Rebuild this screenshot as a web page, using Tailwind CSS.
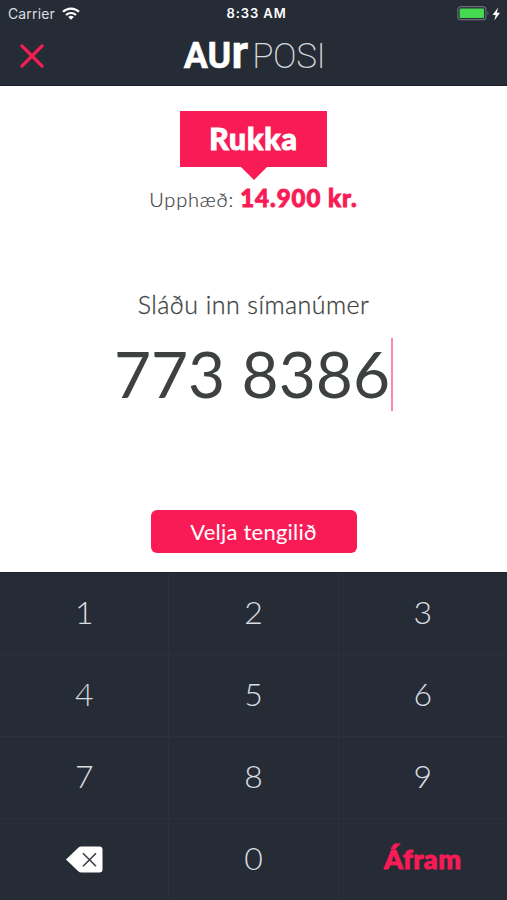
<!DOCTYPE html>
<html lang="is">
  <head>
    <meta charset="UTF-8" />
    <meta name="viewport" content="width=device-width, initial-scale=1.0" />
    <title>Aur Posi</title>
    <script src="https://cdn.jsdelivr.net/npm/@tailwindcss/browser@4"></script>
  </head>
  <body class="bg-white">
    <div class="flex h-[900px] w-[507px] flex-col overflow-hidden font-['Lato','Open_Sans',sans-serif]">
      <header class="h-[86px] shrink-0 border-b border-[#1d212a] bg-[#262c35] text-white">
        <!-- Status bar -->
        <div class="grid h-7 grid-cols-3 items-center pr-1.5 pl-2 font-['Inter',sans-serif] text-[13px]">
          <div class="flex items-center gap-1.5 text-[#dcdee2]">
            <span class="w-[48px] pb-0.5 text-[14px] tracking-[0.01em]">Carrier</span>
            <svg class="mb-0.5 h-[13px] w-[18px]" viewBox="0 0 18 13" fill="none" stroke="#fff" stroke-width="2.2">
              <path d="M1 4.8a11.5 11.5 0 0 1 16 0" />
              <path d="M4 8a7.2 7.2 0 0 1 10 0" />
              <path d="M9 12.8 6.2 10a4 4 0 0 1 5.6 0z" fill="#fff" stroke="none" />
            </svg>
          </div>
          <div class="pl-1 text-center font-semibold tracking-[0.07em] whitespace-nowrap">8:33 AM</div>
          <div class="flex items-center justify-end">
            <svg class="h-4 w-[44px]" viewBox="0 0 44 16">
              <rect x=".8" y=".7" width="28" height="13" rx="3" fill="none" stroke="#696e75" stroke-width="1.2" />
              <rect x="2.6" y="2.5" width="24.4" height="9.4" rx="1" fill="#44d94f" />
              <path d="M30.5 5q2 2.2 0 4.4z" fill="#696e75" />
              <path d="M41.2 1.5 35.5 9h3.2l-1.4 5.5L43 6.8h-3.2z" fill="#fff" />
            </svg>
          </div>
        </div>
        <div class="grid h-14 grid-cols-[1fr_auto_1fr] items-center px-5">
          <svg class="h-6 w-6" viewBox="0 0 24 24" stroke="#f71b56" stroke-width="3.2" stroke-linecap="round">
            <path d="M1.9 1.9l20.2 20.2M22.1 1.9 1.9 22.1" />
          </svg>
          <div class="flex h-14 items-baseline gap-1 pl-0.5 font-['Roboto',sans-serif] text-[36px] leading-[54px]">
            <span class="font-bold [-webkit-text-stroke:0.5px_#fff]">AU<span class="text-[47px] leading-none font-semibold">r</span></span>
            <span class="text-[35px] font-extralight tracking-[-0.01em] text-[#d5d8dd]">POSI</span>
          </div>
        </div>
      </header>

      <main class="flex h-[486px] shrink-0 flex-col items-center bg-white pt-[25px] text-[#3e4142]">
        <div class="flex h-14 w-[147px] items-center justify-center bg-[#f91b56] pb-0.5 text-[30px] font-black tracking-[0.03em] text-white [-webkit-text-stroke:1px_#fff]">Rukka</div>
        <svg class="h-[13px] w-[26px] shrink-0" viewBox="0 0 26 13"><path d="M0 0h26L13 13z" fill="#f91b56" /></svg>
        <p class="mt-0.5 flex h-8 items-baseline gap-1.5 whitespace-nowrap text-xl leading-8">
          <span class="font-light tracking-[0.04em] [-webkit-text-stroke:0.2px_#3e4142]">Upphæð:</span>
          <span class="text-2xl leading-8 font-black tracking-[0.04em] text-[#f91b56] [-webkit-text-stroke:0.9px_#f91b56]">14.900 kr.</span>
        </p>
        <p class="mt-[72px] h-9 text-[25px] leading-9 font-light tracking-[0.018em] whitespace-nowrap [-webkit-text-stroke:0.3px_#3e4142]">Sláðu inn símanúmer</p>
        <div class="mt-[15px] flex h-[74px] items-center gap-px">
          <span class="pb-px text-[64px] leading-[74px] whitespace-nowrap">773 8386</span>
          <span class="h-[73px] w-0.5 bg-[#f98aa7]"></span>
        </div>
        <button class="mt-[99px] h-[43px] w-[206px] rounded-md bg-[#f91b56] pb-px text-[22px] tracking-[0.01em] text-white">Velja tengilið</button>
      </main>

      <!-- Keypad -->
      <div class="grid flex-1 grid-cols-3 grid-rows-4 gap-px border-t border-[#20242d] bg-[#2d303a] text-[32px] font-light text-[#d9dce2]">
        <button class="bg-[#262c35] pb-1">1</button>
        <button class="bg-[#262c35] pb-1">2</button>
        <button class="bg-[#262c35] pb-1">3</button>
        <button class="bg-[#262c35] pb-1">4</button>
        <button class="bg-[#262c35] pb-1">5</button>
        <button class="bg-[#262c35] pb-1">6</button>
        <button class="bg-[#262c35] pb-1">7</button>
        <button class="bg-[#262c35] pb-1">8</button>
        <button class="bg-[#262c35] pb-1">9</button>
        <button class="flex items-center justify-center bg-[#262c35]">
          <svg class="h-[27px] w-[38px]" viewBox="0 0 38 27">
            <path d="M1 13.5 13.5 1.6Q14.7.5 16.2.5H34.5q3 0 3 3v20q0 3-3 3H16.2q-1.5 0-2.7-1.1z" fill="#fff" />
            <path d="M18 7.2l13 13M31 7.2l-13 13" stroke="#3b3f45" stroke-width="1.6" />
          </svg>
        </button>
        <button class="bg-[#262c35] pb-1">0</button>
        <button class="bg-[#262c35] pb-px text-[27px] font-black tracking-[0.02em] text-[#f91b56] [-webkit-text-stroke:0.9px_#f91b56]">Áfram</button>
      </div>
    </div>
  </body>
</html>
